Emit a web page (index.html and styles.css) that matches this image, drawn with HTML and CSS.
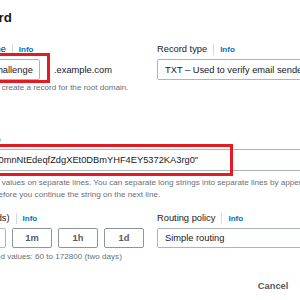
FILE: index.html
```html
<!DOCTYPE html>
<html lang="en">
<head>
  <meta charset="UTF-8" />
  <title>Quick create record</title>
  <link rel="stylesheet" href="styles.css">
</head>
<body>
  <div class="page">
    <h2 class="title">Quick create record</h2>

    <div class="row">
      <div class="field">
        <div class="label">Record name <span class="info">Info</span></div>
        <div class="name-line">
          <div class="hl">
            <div class="input name-input">_acme-challenge</div>
            <span class="mark mark-name"></span>
          </div>
          <span class="suffix">.example.com</span>
        </div>
        <p class="hint">Keep blank to create a record for the root domain.</p>
      </div>
      <div class="field">
        <div class="label">Record type <span class="info">Info</span></div>
        <div class="input select">TXT – Used to verify email senders and for application-specific values
          <svg class="caret" width="8" height="8" viewBox="0 0 8 8"><path d="M1 2.5l3 3 3-3" fill="none" stroke="#545b64" stroke-width="1.5"/></svg>
        </div>
      </div>
    </div>

    <div class="field value">
      <div class="label">Value <span class="info">Info</span></div>
      <div class="hl">
        <div class="input textarea">"hTq4Zr7i0mnNtEdeqfZdgXEt0DBmYHF4EY5372KA3rg0"</div>
        <span class="mark mark-value"></span>
      </div>
      <p class="hint">Enter multiple values on separate lines. You can separate long strings into separate lines by appending a quotation mark at the end of one<br>the line and before you continue the string on the next line.</p>
    </div>

    <div class="row ttl-row">
      <div class="field">
        <div class="label">TTL (seconds) <span class="info">Info</span></div>
        <div class="ttl">
          <div class="input">300</div>
          <button class="chip">1m</button>
          <button class="chip">1h</button>
          <button class="chip">1d</button>
        </div>
        <p class="hint ttl-hint">Recommended values: 60 to 172800 (two days)</p>
      </div>
      <div class="field">
        <div class="label">Routing policy <span class="info">Info</span></div>
        <div class="input select">Simple routing
          <svg class="caret" width="8" height="8" viewBox="0 0 8 8"><path d="M1 2.5l3 3 3-3" fill="none" stroke="#545b64" stroke-width="1.5"/></svg>
        </div>
      </div>
    </div>

    <div class="actions">
      <button class="link-btn">Cancel</button>
      <button class="primary">Create records</button>
    </div>
  </div>
</body>
</html>
```

FILE: styles.css
```css
body {
  margin: 0;
  background: #fff;
  color: #16191f;
  font-family: "Liberation Sans", Arial, sans-serif;
  overflow: hidden;
}
.page {
  margin-left: -50px;
  width: 401px;
}
.title {
  font-size: 13.3px;
  line-height: 16px;
  font-weight: 700;
  margin: 10px 0 0 -63px;
  white-space: nowrap;
}
.row {
  display: grid;
  grid-template-columns: minmax(0, 1fr) minmax(0, 1fr);
  gap: 13px;
  margin-top: 17px;
}
.label {
  display: flex;
  align-items: center;
  font-size: 9.3px;
  line-height: 12px;
  margin-bottom: 4px;
  white-space: nowrap;
}
.info {
  color: #0073bb;
  font-weight: 700;
  font-size: 8px;
  line-height: 11px;
  border-left: 1px solid #d5dbdb;
  margin-left: 6px;
  padding-left: 6px;
}
.input {
  box-sizing: border-box;
  height: 21px;
  border: 1px solid #aab7b8;
  border-radius: 2px;
  padding: 0 7px;
  font-size: 9.3px;
  display: flex;
  align-items: center;
  background: #fff;
  white-space: nowrap;
  overflow: hidden;
}
.name-line {
  display: flex;
  align-items: center;
  gap: 14px;
  font-size: 9.3px;
}
.name-input {
  width: 90px;
  padding-left: 11px;
}
.hl {
  position: relative;
}
.mark {
  position: absolute;
  border: 3px solid #e31b23;
  pointer-events: none;
}
.mark-name {
  top: -6px;
  bottom: -3px;
  left: -10px;
  right: -10px;
}
.mark-value {
  top: -5px;
  bottom: -5px;
  left: -10px;
  right: 118px;
}
.hint {
  font-size: 8.1px;
  line-height: 12px;
  color: #687078;
  margin: 2px 0 0;
  white-space: nowrap;
}
.select {
  position: relative;
  padding-right: 24px;
}
.caret {
  position: absolute;
  right: 8px;
  top: 6px;
}
.value {
  margin-top: 39px;
}
.textarea {
  height: 22px;
}
.value .hint {
  margin-top: 6px;
}
.ttl-row {
  margin-top: 11px;
}
.ttl {
  display: flex;
  gap: 6px;
}
.ttl .input {
  flex: 1;
  height: 20px;
}
.chip {
  flex: none;
  width: 40px;
  height: 20px;
  padding: 0;
  border: 1px solid #8d9596;
  border-radius: 2px;
  background: #fff;
  color: #545b64;
  font-family: inherit;
  font-size: 9.3px;
  font-weight: 700;
}
.ttl-row .select {
  height: 20px;
}
.ttl-hint {
  margin-top: 3px;
}
.actions {
  display: flex;
  justify-content: flex-end;
  gap: 8px;
  width: 453px;
  margin-top: 12px;
}
.actions button {
  height: 21px;
  padding: 0 13px;
  border-radius: 2px;
  font-family: inherit;
  font-size: 9.3px;
  font-weight: 700;
}
.link-btn {
  background: none;
  border: none;
  color: #545b64;
}
.primary {
  background: #ec7211;
  border: 1px solid #ec7211;
  color: #fff;
}
```
